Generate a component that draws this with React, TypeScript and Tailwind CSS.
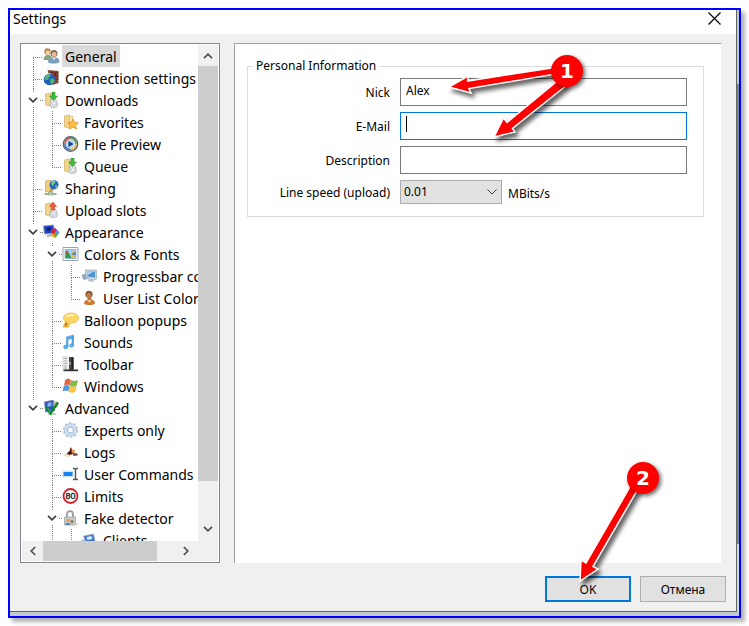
import { useState } from "react";
import type { ReactNode } from "react";

type Guide = "first" | "tee" | "corner" | "line" | "blank" | "open" | "openLast";

type TreeItem = {
  label: string;
  icon: ReactNode;
  guides: Guide[];
};

const folder = (
  <>
    <path d="M2 2l5-1v13l-5-1z" fill="#f3d58a" stroke="#c9a24e" strokeWidth=".6" />
    <path d="M7 2h3v11l-3 1z" fill="#fbe9b4" stroke="#d0ad60" strokeWidth=".6" />
  </>
);

const icons = {
  people: (
    <>
      <circle cx="4" cy="3.400" r="3.200" fill="#b98a4e" />
      <circle cx="4.300" cy="4.400" r="2" fill="#f4d3a8" />
      <path d="M0 12c0-3.500 2-5 4.500-5S8 8 8 12z" fill="#8aa378" />
      <circle cx="10.500" cy="5.400" r="3.500" fill="#7d6a55" />
      <circle cx="10.600" cy="6.500" r="2.400" fill="#e4bd98" />
      <path d="M4.500 14c0-3.500 2.500-4.800 6-4.800S16 11 16 14c-2 2-10 2-11.500 0z" fill="#7aa0c0" />
      <path d="M9 9.800l1.600 2.500L12.200 9.800z" fill="#e4edf5" />
    </>
  ),
  globeWall: (
    <>
      <path d="M4 0l11 1v12l-6 2z" fill="#8a4436" />
      <path d="M5 3h10M6 6h9M8 9h7M8 1v2M12 3v3M10 6v3" stroke="#4f241d" strokeWidth=".8" />
      <circle cx="6" cy="9.500" r="5.800" fill="#1c5fc0" />
      <path d="M2 6c2-2.500 4-2 5-1S5 7 5 9s-2 0-3 1-1.500-2 0-4zM7 9c2-1 4 0 4 1.500S9 14 8 14s-2-4-1-5z" fill="#55b56a" />
      <path d="M3 5c1-1.500 4-2 5-1" stroke="#a9d4ff" fill="none" />
    </>
  ),
  folderDown: (
    <>
      {folder}
      <path d="M7 8l5-1 2 5-1 3-5 .5-1.500-2z" fill="#dfe3e6" stroke="#9ea5ab" strokeWidth=".7" />
      <circle cx="10.500" cy="11.500" r="1.600" fill="#fff" stroke="#aab" strokeWidth=".5" />
      <path d="M8.500 0h3v4H14l-4 4.500L6 4h2.500z" fill="#3dbb3d" stroke="#218821" strokeWidth=".5" />
    </>
  ),
  folderStar: (
    <>
      {folder}
      <path d="M10.500 5l1.600 3.400 3.700.4-2.700 2.500.8 3.700-3.400-1.900L7.200 15l.7-3.700-2.700-2.500 3.700-.4z" fill="#ffc03c" stroke="#e08a1c" strokeWidth=".7" />
    </>
  ),
  preview: (
    <>
      <circle cx="8" cy="8" r="7.100" fill="#fff" stroke="#5d6672" strokeWidth="1.600" />
      <path d="M2.500 8A5.500 5.500 0 018 2.500" stroke="#e14b36" strokeWidth="1.500" fill="none" />
      <path d="M8 2.500A5.500 5.500 0 0113.500 8" stroke="#4bab50" strokeWidth="1.500" fill="none" />
      <path d="M13.500 8A5.500 5.500 0 018 13.500" stroke="#efb62a" strokeWidth="1.500" fill="none" />
      <path d="M8 13.500A5.500 5.500 0 012.500 8" stroke="#3272cc" strokeWidth="1.500" fill="none" />
      <circle cx="8" cy="8" r="4.300" fill="#b9d5f5" />
      <path d="M6 5l5 3-5 3z" fill="#173a83" />
    </>
  ),
  folderGlobe: (
    <>
      <path d="M2 1l5-1v11l-5 1z" fill="#f0cd7e" stroke="#c29c49" strokeWidth=".6" />
      <path d="M7 2h3v9l-3 1z" fill="#c39748" />
      <circle cx="10.500" cy="4.700" r="4.500" fill="#2668b5" />
      <path d="M8 2c2-2 4-1 4 0s-2 1-2 3-3 0-2-3zM12 5c2 0 2 1 1 3h-1z" fill="#7fd08a" />
      <path d="M1 14h12M7 11v3" stroke="#7e9b78" strokeWidth="1.400" />
      <path d="M5 12h4v3H5z" fill="#bcd0b7" stroke="#7e9b78" strokeWidth=".6" />
    </>
  ),
  folderUp: (
    <>
      {folder}
      <path d="M7 9l5-2 2 5-1 3-5 .5-1.500-2z" fill="#dfe3e6" stroke="#9ea5ab" strokeWidth=".7" />
      <circle cx="10.500" cy="11.500" r="1.600" fill="#fff" stroke="#aab" strokeWidth=".5" />
      <path d="M8 8V4.500H6L9.500 0 13 4.500h-2V8z" fill="#f05a3c" stroke="#c7351c" strokeWidth=".5" />
    </>
  ),
  appearance: (
    <>
      <path d="M0 2l10-1 1 8-10 1z" fill="#1d43c4" stroke="#8e97a8" strokeWidth=".8" />
      <path d="M3 4l4-1 1 3-4 1z" fill="#0e1e78" />
      <path d="M3 11l5-1 1 2-5 1z" fill="#a6adb8" />
      <path d="M8 5l4-1v9l-4-3z" fill="#d22a35" />
      <path d="M11 4l3 2-2 3z" fill="#7b39c9" />
      <path d="M14 6l2 3-4 1z" fill="#2588dd" />
      <path d="M15.500 9L12 14l-1-4z" fill="#3db24b" />
      <path d="M7 9l4 1 1 4-3-1z" fill="#e8a82b" />
    </>
  ),
  picture: (
    <>
      <path d="M.5 1.500h15v13H.5z" fill="#fff" stroke="#9aa5b0" />
      <path d="M2.500 3.500h11v9h-11z" fill="#9fd0fa" stroke="#5f9bd0" strokeWidth=".6" />
      <path d="M3 7l2-1.500L7 8l2 4H3z" fill="#329b3b" />
      <circle cx="4.500" cy="6" r="1.300" fill="#e03c2d" />
      <path d="M8.500 6l4-1.500V12H9z" fill="#e9be43" />
      <path d="M10 7l3-1v3h-3z" fill="#3d7fca" />
    </>
  ),
  monitor: (
    <>
      <path d="M4 2h11v9l-2 1-9-2z" fill="#cdd4dc" stroke="#a3aebb" strokeWidth=".8" />
      <path d="M6 3.500h7.500v6L6 8.500z" fill="#4c93d3" />
      <path d="M6 3.500h6L6 7.500z" fill="#a5d2f5" />
      <path d="M0 7l4-1.500L6 11l-4 1z" fill="#8fa9c0" />
      <path d="M6 11l6 1.500V14l-5-1z" fill="#b4bdc7" />
    </>
  ),
  user: (
    <>
      <circle cx="7.500" cy="4.300" r="3.600" fill="#8e5a30" />
      <circle cx="7.500" cy="5.200" r="2.200" fill="#b98250" />
      <path d="M6 8h4v3H6z" fill="#bb773a" />
      <path d="M2.500 13.500c0-3 2.500-4 5.500-4s5.500 1 5.500 4c-2 2-9 2-11 0z" fill="#cc7a38" />
      <path d="M5.500 10l2.500 3 2-3z" fill="#f3c890" />
    </>
  ),
  balloon: (
    <>
      <path d="M8.500 1C13 1 16 3 16 6s-3 5-7 5L5 14l.5-3.500C2 10 1 8 1 6c0-3 3-5 7.500-5z" fill="#fbd768" stroke="#e8b83a" strokeWidth=".7" />
      <path d="M3 5c1-3 8-4 10-1-3 0-7 0-10 1z" fill="#fff3bd" />
      <path d="M3.500 9.500L6.500 15H.5z" fill="#f9bd3a" stroke="#db9a23" strokeWidth=".7" />
      <path d="M3.500 11v2M3.500 13.600v.7" stroke="#613607" strokeWidth=".9" />
    </>
  ),
  note: (
    <>
      <path d="M4 3l7-2v3L5.500 5.500V13h-1.500zM9.500 3H11v8.500H9.500z" fill="#5eaee8" stroke="#2c80c4" strokeWidth=".5" />
      <ellipse cx="3.300" cy="13" rx="2.200" ry="1.900" fill="#64b5ee" stroke="#2c80c4" strokeWidth=".5" />
      <ellipse cx="9" cy="11.500" rx="2" ry="1.700" fill="#64b5ee" stroke="#2c80c4" strokeWidth=".5" />
    </>
  ),
  toolbar: (
    <>
      <path d="M.5 1h5v12h-5z" fill="#f2f2f2" stroke="#b5b5b5" strokeWidth=".6" />
      <path d="M1.500 2.500h3M1.500 5h3M1.500 7.500h3M1.500 10h3M1.500 12h3" stroke="#a8a8a8" />
      <path d="M5 1h2.500v12H5z" fill="#f8f8f8" />
      <path d="M6.500 1H11v13H6.500z" fill="#4a4a4a" />
      <path d="M9 1.500h2V13H9z" fill="#1e1e1e" />
      <path d="M7.500 6v3" stroke="#ddd" />
      <path d="M1 13.500h14.500v1.700H1z" fill="#2e2e2e" />
    </>
  ),
  windows: (
    <>
      <path d="M3 2c2-1.500 3.500-1 5 0L7 7C5 6 3.500 6 2 7z" fill="#ed6638" stroke="#c9401c" strokeWidth=".5" />
      <path d="M9 2.500c2 1.200 4 1 6 0l-1.200 5c-2 1-4 1-6 0z" fill="#82bd3b" stroke="#5a9423" strokeWidth=".5" />
      <path d="M1.700 8c1.500-1.200 3-1 5 0l-1.200 5c-2-1.200-3.500-1-5 0z" fill="#4c9ce6" stroke="#2a72bd" strokeWidth=".5" />
      <path d="M7.600 8.500c2 1 4 1.200 6 0l-1.200 5c-2 1.200-4 1-6 0z" fill="#fbc83a" stroke="#d99e17" strokeWidth=".5" />
    </>
  ),
  advanced: (
    <>
      <path d="M1 2l9-2 1 11-9 1z" fill="#2c55b8" stroke="#7d8ba8" strokeWidth=".8" />
      <path d="M4 3l4-1v4l-4 1z" fill="#89b1e8" />
      <path d="M10 1l5 1-1 5-4 2z" fill="#c7b9a0" />
      <path d="M4 13l8 0 1 2H5z" fill="#c5cad2" />
      <path d="M2.500 7L7 13.500 14.500 2.500" stroke="#0d8a1b" strokeWidth="2.400" fill="none" />
      <path d="M4 8l3 4" stroke="#6fe07a" strokeWidth=".7" />
    </>
  ),
  gear: (
    <>
      <circle cx="8" cy="8" r="6.800" fill="none" stroke="#b5c9de" strokeWidth="1.800" strokeDasharray="2.700 1.600" />
      <circle cx="8" cy="8" r="4.700" fill="#fff" stroke="#cfdff0" strokeWidth="3.200" />
      <circle cx="8" cy="8" r="6.200" fill="none" stroke="#9bb8d6" strokeWidth=".5" />
      <circle cx="8" cy="8" r="3" fill="#fff" stroke="#86a9cf" strokeWidth=".9" />
    </>
  ),
  log: (
    <>
      <path d="M0 11l6-3 3 4-5 1z" fill="#efe2cc" />
      <path d="M4 10l3-3 1-4 2 3 2 1-1 3-4 1z" fill="#7b2b1e" />
      <path d="M5 9l3-2 1 3z" fill="#27130f" />
      <path d="M9 6.500l3-1 1 2-3 2z" fill="#e8a14c" />
      <path d="M10 9l5 .5v2l-4 .5z" fill="#6b4b40" />
    </>
  ),
  command: (
    <>
      <path d="M0 4.500h11v7H0z" fill="#d6e9fc" />
      <path d="M1 6h9v4H1z" fill="#1684ea" />
      <path d="M10.500 2.500h1.500l1 1 1-1h1.500M13 3v10M10.500 13.500H12l1-1 1 1h1.500" stroke="#555" strokeWidth="1.400" fill="none" />
    </>
  ),
  limit: (
    <>
      <circle cx="8" cy="8" r="7" fill="#fff" stroke="#d5202a" strokeWidth="1.800" />
      <text x="8" y="11.200" fontSize="9" textAnchor="middle" fontFamily="Liberation Sans, sans-serif" fill="#111" stroke="#111" strokeWidth=".3">
        80
      </text>
    </>
  ),
  lock: (
    <>
      <path d="M4.500 8V4.500C4.500 0 10.500 0 10.500 4.500V8" stroke="#9a9a9a" strokeWidth="1.800" fill="none" />
      <path d="M2 7h11v8H2z" fill="#c6c9cd" stroke="#a0a3a7" strokeWidth=".8" />
      <circle cx="5.500" cy="10.500" r="1.700" fill="#d9a45c" />
      <circle cx="9.500" cy="11.500" r="1.700" fill="#a08260" />
      <path d="M3 15c0-3 4-3 5 0z" fill="#507fae" />
      <path d="M12 13h3v2h-3z" fill="#cfd2d5" />
    </>
  ),
  client: (
    <>
      <path d="M2 4l10-2 2 9-9 3z" fill="#3f74c8" stroke="#a3b4cc" strokeWidth=".8" />
      <path d="M5 5l5-1 1 3-5 1z" fill="#d7e6f8" />
      <path d="M0 8l4-1 1 5-4 1z" fill="#9db4d0" />
    </>
  ),
};

const treeItems: TreeItem[] = [
  { label: "General", icon: icons.people, guides: ["first"] },
  { label: "Connection settings", icon: icons.globeWall, guides: ["tee"] },
  { label: "Downloads", icon: icons.folderDown, guides: ["open"] },
  { label: "Favorites", icon: icons.folderStar, guides: ["line", "tee"] },
  { label: "File Preview", icon: icons.preview, guides: ["line", "tee"] },
  { label: "Queue", icon: icons.folderDown, guides: ["line", "corner"] },
  { label: "Sharing", icon: icons.folderGlobe, guides: ["tee"] },
  { label: "Upload slots", icon: icons.folderUp, guides: ["tee"] },
  { label: "Appearance", icon: icons.appearance, guides: ["open"] },
  { label: "Colors & Fonts", icon: icons.picture, guides: ["line", "open"] },
  { label: "Progressbar colors", icon: icons.monitor, guides: ["line", "line", "tee"] },
  { label: "User List Colors", icon: icons.user, guides: ["line", "line", "corner"] },
  { label: "Balloon popups", icon: icons.balloon, guides: ["line", "tee"] },
  { label: "Sounds", icon: icons.note, guides: ["line", "tee"] },
  { label: "Toolbar", icon: icons.toolbar, guides: ["line", "tee"] },
  { label: "Windows", icon: icons.windows, guides: ["line", "corner"] },
  { label: "Advanced", icon: icons.advanced, guides: ["openLast"] },
  { label: "Experts only", icon: icons.gear, guides: ["blank", "tee"] },
  { label: "Logs", icon: icons.log, guides: ["blank", "tee"] },
  { label: "User Commands", icon: icons.command, guides: ["blank", "tee"] },
  { label: "Limits", icon: icons.limit, guides: ["blank", "tee"] },
  { label: "Fake detector", icon: icons.lock, guides: ["blank", "open"] },
  { label: "Clients", icon: icons.client, guides: ["blank", "line", "tee"] },
];

function Chevron({ className }: { className?: string }) {
  return (
    <svg viewBox="0 0 10 6" className={className} fill="none" stroke="currentColor" aria-hidden="true">
      <path d="M1 .8l4 4 4-4" strokeWidth="1.700" />
    </svg>
  );
}

const dotsDown = "w-px bg-[repeating-linear-gradient(to_bottom,#808080_0_1px,transparent_1px_2px)]";
const dotsAcross = "h-px bg-[repeating-linear-gradient(to_right,#808080_0_1px,transparent_1px_2px)]";

// One 19px column of the tree: dotted connector or an expand arrow
function GuideCell({ type }: { type: Guide }) {
  if (type === "blank") return <span className="w-[19px] shrink-0" />;

  if (type === "open" || type === "openLast") {
    return (
      <span className="flex w-[19px] shrink-0 flex-col">
        <span className={`ml-[9px] h-1 ${dotsDown}`} />
        <span className="flex h-[14px] items-center justify-between pl-1">
          <button type="button" aria-label="Collapse" className="flex">
            <Chevron className="h-[6px] w-[10px] text-[#404040]" />
          </button>
          <span className={`w-[3px] ${dotsAcross}`} />
        </span>
        {type === "open" && <span className={`ml-[9px] h-1 ${dotsDown}`} />}
      </span>
    );
  }

  return (
    <span className="flex w-[19px] shrink-0 flex-col pl-[9px]">
      <span className={`h-3 ${type !== "first" ? dotsDown : ""}`} />
      {type !== "line" && <span className={`w-full ${dotsAcross}`} />}
      {type !== "corner" && <span className={`flex-1 ${dotsDown}`} />}
    </span>
  );
}

function SettingsTree() {
  const [selected, setSelected] = useState("General");

  return (
    <nav className="flex w-[200px] shrink-0 flex-col border border-[#828790] bg-white p-px">
      <div className="flex min-h-0 flex-1">
        <ul role="tree" className="min-w-0 flex-1 overflow-hidden pl-[2px] font-['Noto_Sans',sans-serif] text-[14px]">
          {treeItems.map((item) => (
            <li
              key={item.label}
              role="treeitem"
              aria-selected={item.label === selected}
              onClick={() => setSelected(item.label)}
              className="flex h-[22px] whitespace-nowrap"
            >
              {item.guides.map((type, i) => (
                <GuideCell key={i} type={type} />
              ))}
              <svg viewBox="0 0 16 16" className="mr-[2px] h-4 w-[17px] shrink-0 self-center" aria-hidden="true">
                {item.icon}
              </svg>
              <span className={`h-[22px] px-[3px] leading-6 ${item.label === selected ? "bg-[#d9d9d9]" : ""}`}>{item.label}</span>
            </li>
          ))}
        </ul>
        <div className="flex w-5 shrink-0 flex-col bg-[#f0f0f0] text-[#505050]">
          <button type="button" aria-label="Scroll up" className="flex h-[21px] items-center justify-center">
            <Chevron className="h-[6px] w-[10px] rotate-180" />
          </button>
          <div className="flex-1">
            <div className="h-[92%] bg-[#cdcdcd]" />
          </div>
          <button type="button" aria-label="Scroll down" className="flex h-6 items-center justify-center">
            <Chevron className="h-[6px] w-[10px]" />
          </button>
        </div>
      </div>
      <div className="flex h-5 bg-[#f0f0f0] pr-5 text-[#505050]">
        <button type="button" aria-label="Scroll left" className="flex w-[21px] items-center justify-center">
          <Chevron className="h-[6px] w-[10px] rotate-90" />
        </button>
        <div className="flex-1">
          <div className="h-full w-[87%] bg-[#cdcdcd]" />
        </div>
        <button type="button" aria-label="Scroll right" className="flex w-6 items-center justify-center">
          <Chevron className="h-[6px] w-[10px] -rotate-90" />
        </button>
      </div>
    </nav>
  );
}

const inputClass = "block h-7 w-full border border-[#7a7a7a] bg-white px-[5px] pb-1 outline-none";
const labelClass = "pt-[2px] text-right";

function PersonalInformation() {
  return (
    <fieldset className="border border-[#dcdcdc] pt-1 pr-4 pb-3">
      <legend className="ml-[5px] px-[3px] leading-4">Personal Information</legend>
      <div className="grid grid-cols-[142px_1fr] items-center gap-x-[10px] gap-y-[6px]">
        <label htmlFor="nick" className={labelClass}>
          Nick
        </label>
        <input id="nick" defaultValue="Alex" className={inputClass} />

        <label htmlFor="email" className={labelClass}>
          E-Mail
        </label>
        <div className="relative">
          <input id="email" className="block h-7 w-full border border-[#0078d7] bg-white px-[5px] outline-none" />
          <span className="absolute top-1 left-[6px] h-4 w-px bg-black" />
        </div>

        <label htmlFor="description" className={labelClass}>
          Description
        </label>
        <input id="description" className={inputClass} />

        <label htmlFor="speed" className={labelClass}>
          Line speed (upload)
        </label>
        <div className="flex items-center gap-[6px]">
          <div className="relative">
            <select
              id="speed"
              defaultValue="0.01"
              className="block h-6 w-[102px] appearance-none border border-[#adadad] bg-[#e1e1e1] px-[3px] outline-none"
            >
              <option>0.01</option>
              <option>0.02</option>
              <option>0.05</option>
              <option>0.1</option>
            </select>
            <svg viewBox="0 0 10 6" className="pointer-events-none absolute top-[9px] right-[5px] h-[6px] w-[10px]" fill="none" stroke="#404040">
              <path d="M.5.5L5 5 9.500.5" />
            </svg>
          </div>
          <span className="pt-1">MBits/s</span>
        </div>
      </div>
    </fieldset>
  );
}

function Badge({ children }: { children: ReactNode }) {
  return (
    <span className="flex h-8 w-8 items-center justify-center rounded-full bg-[#fe0000] font-['DejaVu_Sans',sans-serif] text-[20px] font-bold text-white shadow-[2px_2px_4px_rgba(0,0,0,0.6)]">
      {children}
    </span>
  );
}

const arrowClass = "fill-[#fe0000] stroke-white drop-shadow-[3px_4px_2px_rgba(0,0,0,0.6)]";

export default function App() {
  return (
    <div className="h-screen bg-white p-2 text-black">
      <div className="relative flex h-full border-2 border-[#0000ff] bg-[#c5cad0] pb-1 shadow-[4px_4px_4px_rgba(0,0,0,0.3)]">
        <div className="flex min-w-0 flex-1 flex-col border-r border-b border-[#5f6468] bg-[#f0f0f0]">
          <header className="flex h-6 items-center justify-between bg-white pr-[15px] pl-[3px]">
            <h1 className="pb-[6px] font-['Noto_Sans',sans-serif] text-[14px] leading-5">Settings</h1>
            <button type="button" aria-label="Close" className="pb-2">
              <svg viewBox="0 0 13 13" className="h-[13px] w-[13px]" stroke="#000" strokeWidth="1.200">
                <path d="M.5.5l12 12M12.500.5l-12 12" />
              </svg>
            </button>
          </header>

          <main className="flex min-h-0 flex-1 gap-[14px] pt-[9px] pr-[15px] pl-[10px]">
            <SettingsTree />
            <section className="min-w-0 flex-1 border-t border-l border-[#a0a0a0] bg-white pt-[14px] pr-[17px] pl-3 font-['Noto_Sans',sans-serif] text-[12px]">
              <PersonalInformation />
            </section>
          </main>

          <footer className="flex justify-end gap-[9px] pt-[13px] pr-[10px] pb-[9px] font-['Noto_Sans',sans-serif] text-[12px]">
            <button type="button" className="h-[26px] w-[86px] border-2 border-[#0078d7] bg-[#e1e1e1] pt-[2px]">
              OK
            </button>
            <button type="button" className="h-[26px] w-[86px] border border-[#adadad] bg-[#e1e1e1] pt-[2px]">
              Отмена
            </button>
          </footer>
        </div>
        <div className="flex w-[2px] flex-col">
          <div className="h-[74px] bg-[#c5cad0]" />
          <div className="flex-1 bg-[#808488]" />
          <div className="h-[68px] bg-[#d5dbe2]" />
        </div>

        {/* Callout arrows with their numbered badges */}
        <svg viewBox="0 0 140 90" className="pointer-events-none absolute top-[55px] right-[156px] h-[90px] w-[140px]">
          <path className={arrowClass} strokeWidth="1.500" d="M6 22L25 11 24.500 16 112 2.500 113 9 26 23.500 28 28z" />
          <path className={arrowClass} strokeWidth="1.500" d="M51 72L60.500 53 64 57.500 118 13 124 20 69.500 63.500 72 67z" />
        </svg>
        <div className="pointer-events-none absolute top-[45px] right-[156px]">
          <Badge>1</Badge>
        </div>
        <svg viewBox="0 0 80 120" className="pointer-events-none absolute right-[96px] bottom-[25px] h-[120px] w-[80px]">
          <path className={arrowClass} strokeWidth="1.500" d="M17 110L18 89 23 92 68 14 75 18 30 95.500 35 98z" />
        </svg>
        <div className="pointer-events-none absolute right-[80px] bottom-[122px]">
          <Badge>2</Badge>
        </div>
      </div>
    </div>
  );
}
